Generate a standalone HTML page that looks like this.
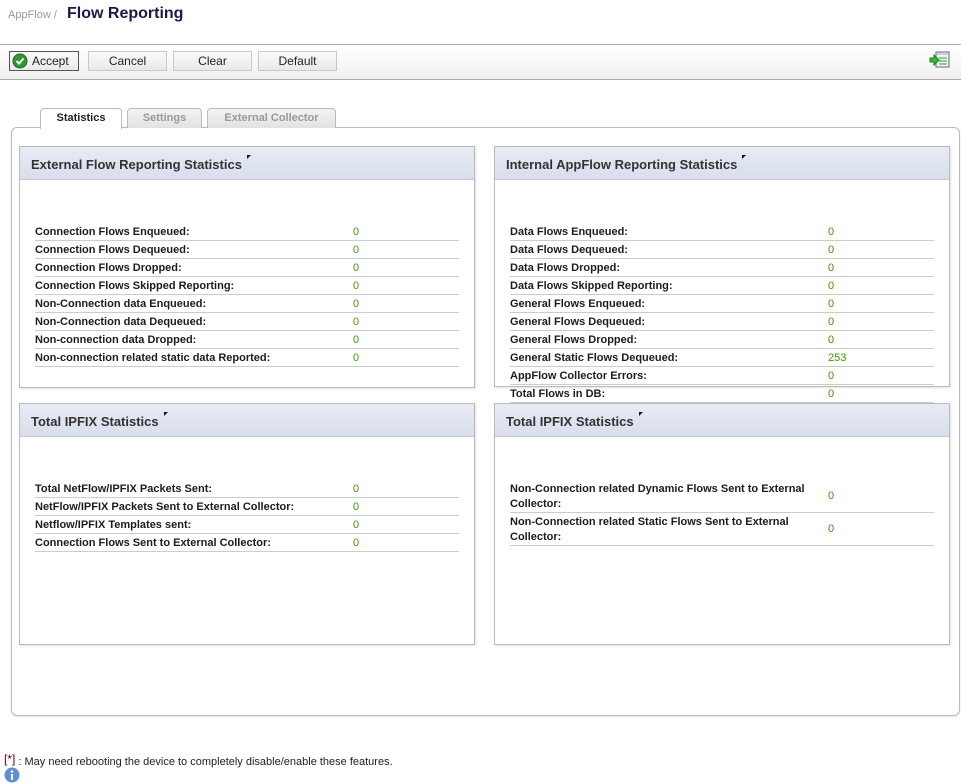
<!DOCTYPE html>
<html><head><meta charset="utf-8"><style>
*{margin:0;padding:0;box-sizing:border-box}
body{width:961px;height:781px;position:relative;background:#fff;font-family:"Liberation Sans",Tahoma,sans-serif;font-size:11px;color:#222;overflow:hidden}
.a{position:absolute}
.btn{position:absolute;top:51px;height:20px;border:1px solid #c9c9c9;background:linear-gradient(#fafafa,#e9e9e9);font-size:12px;text-align:center;line-height:18px;color:#222}
.tab{position:absolute;top:108px;height:20px;border:1px solid #bbb;border-bottom:none;border-radius:4px 4px 0 0;background:linear-gradient(#f3f3f3,#e2e2e2);font-weight:bold;color:#999;text-align:center;line-height:19px;font-size:11px}
.panel{position:absolute;border:1px solid #bbb;background:#fff;box-shadow:1px 1px 2px rgba(0,0,0,.12)}
.hd{position:absolute;left:0;right:0;top:0;height:33px;background:linear-gradient(#e8ebf4,#d9deec);border-bottom:1px solid #c3c8d6;font-size:13px;font-weight:bold;color:#333;padding:10px 0 0 11px}
.hd i{display:inline-block;width:0;height:0;border-top:4px solid #111;border-right:4px solid transparent;vertical-align:top;margin:-2px 0 0 5px}
.row{position:absolute;height:18px;border-bottom:1px solid #ccc;font-weight:bold;font-size:11px;line-height:17px;padding-top:1px;color:#1c1c1c}
.row span{position:absolute;font-weight:normal;color:#3a9a00}
</style></head><body>
<div class="a" style="left:8px;top:9px;font-size:11px;color:#999">AppFlow /</div>
<div class="a" style="left:67px;top:5px;font-size:16px;font-weight:bold;color:#1a1a4a">Flow Reporting</div>
<div class="a" style="left:0;top:44px;width:961px;height:36px;border-top:1px solid #aaa;border-bottom:1px solid #aaa;background:linear-gradient(#fff,#f0f0f0)"></div>
<div class="btn" style="left:9px;width:70px;border-color:#555;text-align:left;padding-left:22px">Accept</div>
<svg class="a" style="left:12px;top:53px" width="16" height="16"><circle cx="8" cy="8" r="7" fill="#2c9a2c" stroke="#1a6a1a"/><path d="M4.5 8l2.5 2.5 4.5-5" stroke="#fff" stroke-width="2" fill="none"/></svg>
<div class="btn" style="left:88px;width:79px">Cancel</div>
<div class="btn" style="left:173px;width:79px">Clear</div>
<div class="btn" style="left:258px;width:79px">Default</div>
<svg class="a" style="left:929px;top:51px" width="22" height="18"><rect x="7" y="1" width="13" height="15" fill="#f4f4f4" stroke="#667"/><rect x="8" y="2" width="11" height="2" fill="#ccd"/><path d="M10 7h8M10 10h8M10 13h8" stroke="#2a2"/><path d="M1 7h4V4l5 5-5 5v-3H1z" fill="#3b3" stroke="#181"/></svg>

<div class="a" style="left:11px;top:127px;width:949px;height:589px;border:1px solid #bbb;border-radius:6px;box-shadow:0 1px 2px rgba(0,0,0,.1)"></div>
<div class="tab" style="left:40px;width:82px;height:21px;background:#fff;color:#222">Statistics</div>
<div class="tab" style="left:127px;width:75px">Settings</div>
<div class="tab" style="left:207px;width:129px">External Collector</div>

<div class="panel" style="left:19px;top:146px;width:456px;height:242px"><div class="hd">External Flow Reporting Statistics<i></i></div></div>
<div class="panel" style="left:494px;top:146px;width:456px;height:241px"><div class="hd">Internal AppFlow Reporting Statistics<i></i></div></div>
<div class="panel" style="left:19px;top:403px;width:456px;height:242px"><div class="hd">Total IPFIX Statistics<i></i></div></div>
<div class="panel" style="left:494px;top:403px;width:456px;height:242px"><div class="hd">Total IPFIX Statistics<i></i></div></div>

<div class="a" style="left:35px;top:0">
<div class="row" style="top:223px;left:0;width:424px">Connection Flows Enqueued:<span style="left:318px">0</span></div>
<div class="row" style="top:241px;left:0;width:424px">Connection Flows Dequeued:<span style="left:318px">0</span></div>
<div class="row" style="top:259px;left:0;width:424px">Connection Flows Dropped:<span style="left:318px">0</span></div>
<div class="row" style="top:277px;left:0;width:424px">Connection Flows Skipped Reporting:<span style="left:318px">0</span></div>
<div class="row" style="top:295px;left:0;width:424px">Non-Connection data Enqueued:<span style="left:318px">0</span></div>
<div class="row" style="top:313px;left:0;width:424px">Non-Connection data Dequeued:<span style="left:318px">0</span></div>
<div class="row" style="top:331px;left:0;width:424px">Non-connection data Dropped:<span style="left:318px">0</span></div>
<div class="row" style="top:349px;left:0;width:424px">Non-connection related static data Reported:<span style="left:318px">0</span></div>
<div class="row" style="top:480px;left:0;width:424px">Total NetFlow/IPFIX Packets Sent:<span style="left:318px">0</span></div>
<div class="row" style="top:498px;left:0;width:424px">NetFlow/IPFIX Packets Sent to External Collector:<span style="left:318px">0</span></div>
<div class="row" style="top:516px;left:0;width:424px">Netflow/IPFIX Templates sent:<span style="left:318px">0</span></div>
<div class="row" style="top:534px;left:0;width:424px">Connection Flows Sent to External Collector:<span style="left:318px">0</span></div>
</div>
<div class="a" style="left:510px;top:0">
<div class="row" style="top:223px;left:0;width:424px">Data Flows Enqueued:<span style="left:318px">0</span></div>
<div class="row" style="top:241px;left:0;width:424px">Data Flows Dequeued:<span style="left:318px">0</span></div>
<div class="row" style="top:259px;left:0;width:424px">Data Flows Dropped:<span style="left:318px">0</span></div>
<div class="row" style="top:277px;left:0;width:424px">Data Flows Skipped Reporting:<span style="left:318px">0</span></div>
<div class="row" style="top:295px;left:0;width:424px">General Flows Enqueued:<span style="left:318px">0</span></div>
<div class="row" style="top:313px;left:0;width:424px">General Flows Dequeued:<span style="left:318px">0</span></div>
<div class="row" style="top:331px;left:0;width:424px">General Flows Dropped:<span style="left:318px">0</span></div>
<div class="row" style="top:349px;left:0;width:424px">General Static Flows Dequeued:<span style="left:318px">253</span></div>
<div class="row" style="top:367px;left:0;width:424px">AppFlow Collector Errors:<span style="left:318px">0</span></div>
<div class="row" style="top:385px;left:0;width:424px">Total Flows in DB:<span style="left:318px">0</span></div>
<div class="row" style="top:480px;left:0;width:424px;height:33px;line-height:15px;padding-top:2px">Non-Connection related Dynamic Flows Sent to External<br>Collector:<span style="left:318px;top:9px">0</span></div>
<div class="row" style="top:513px;left:0;width:424px;height:33px;line-height:15px;padding-top:2px">Non-Connection related Static Flows Sent to External<br>Collector:<span style="left:318px;top:9px">0</span></div>
</div>

<div class="a" style="left:4px;top:752px;font-size:11px;color:#222"><span style="color:#600;font-size:12px;vertical-align:2px">[*]</span> : May need rebooting the device to completely disable/enable these features.</div>
<svg class="a" style="left:4px;top:767px" width="16" height="16"><circle cx="8" cy="8" r="7.5" fill="#5b8fd6"/><circle cx="8" cy="4.5" r="1.3" fill="#fff"/><rect x="7" y="7" width="2" height="6" fill="#fff"/></svg>
</body></html>
